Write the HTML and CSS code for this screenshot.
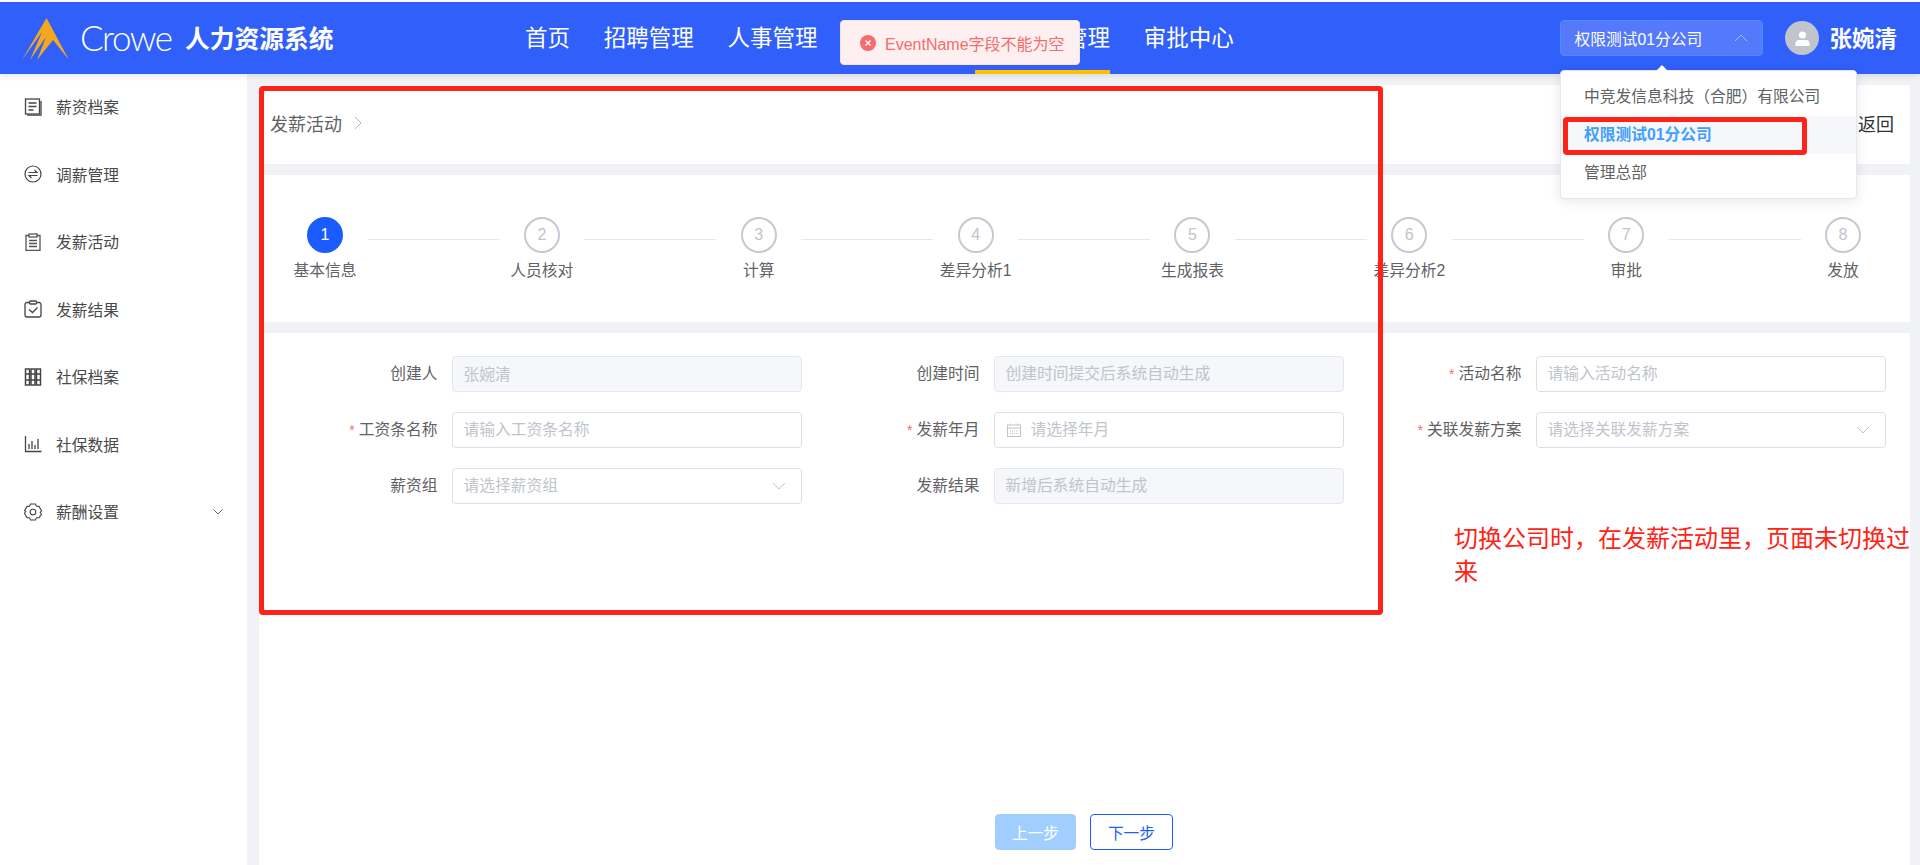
FILE: index.html
```html
<!DOCTYPE html>
<html lang="zh-CN">
<head>
<meta charset="utf-8">
<title>人力资源系统</title>
<link rel="stylesheet" href="styles.css">
</head>
<body>
<div class="app">
  <header class="header">
    <div class="brand">
      <svg class="logo" width="47" height="42" viewBox="0 0 47 42"><path fill="#f4a81f" d="M24.500 0 47 42 31 22 15 42 24 19 8 42 20 14 0 42Z"/></svg>
      <span class="crowe">Crowe</span>
      <span class="title">人力资源系统</span>
    </div>
    <nav class="nav">
      <a class="nav-item">首页</a>
      <a class="nav-item">招聘管理</a>
      <a class="nav-item">人事管理</a>
      <a class="nav-item">组织管理</a>
      <a class="nav-item active">薪酬福利管理</a>
      <a class="nav-item">审批中心</a>
    </nav>
    <div class="user-area">
      <div class="company">
        <span>权限测试01分公司</span>
        <svg class="company-chevron" width="14" height="8" viewBox="0 0 14 8"><path d="M1 7 7 1l6 6" fill="none" stroke="#a9bcfb" stroke-width="1"/></svg>
      </div>
      <div class="avatar">
        <svg width="15" height="15" viewBox="0 0 15 15"><circle cx="7.500" cy="4" r="3.600" fill="#fff"/><path d="M.5 15v-2.500C.5 10.500 2 9 4 9h7c2 0 3.500 1.500 3.500 3.500V15Z" fill="#fff"/></svg>
      </div>
      <span class="username">张婉清</span>
    </div>
  </header>

  <div class="body">
    <aside class="sidebar">
      <div class="side-item">
        <svg class="side-icon" viewBox="0 0 18 18" fill="none" stroke="#444" stroke-width="1.300"><rect x="1.500" y="1" width="14" height="15"/><path d="M3 17.200h14V3M4.500 5h8M4.500 8.500h8M4.500 12h5"/></svg>
        <span>薪资档案</span>
      </div>
      <div class="side-item">
        <svg class="side-icon" viewBox="0 0 18 18" fill="none" stroke="#444" stroke-width="1.200"><circle cx="9" cy="9" r="8"/><path d="M4.500 7.500h8.500L10.500 5M13.500 10.500H5l2.500 2.500"/></svg>
        <span>调薪管理</span>
      </div>
      <div class="side-item">
        <svg class="side-icon" viewBox="0 0 18 18" fill="none" stroke="#555" stroke-width="1.300"><path d="M5 2.500H2v15h14v-15h-3"/><rect x="5" y="1" width="8" height="3"/><path d="M5 7.500h8M5 10.500h8M5 13.500h8"/></svg>
        <span>发薪活动</span>
      </div>
      <div class="side-item">
        <svg class="side-icon" viewBox="0 0 18 18" fill="none" stroke="#444" stroke-width="1.300"><path d="M5.500 2.500H3a2 2 0 0 0-2 2V15a2 2 0 0 0 2 2h12a2 2 0 0 0 2-2V4.500a2 2 0 0 0-2-2h-2.500"/><rect x="5.500" y="1" width="7" height="3" rx="1"/><path d="m5 9.500 3.500 3 5-5"/></svg>
        <span>发薪结果</span>
      </div>
      <div class="side-item">
        <svg class="side-icon" viewBox="0 0 18 18" fill="none" stroke="#444" stroke-width="1.500"><rect x="1.500" y="1" width="4" height="16"/><rect x="7" y="1" width="4" height="16"/><rect x="12.500" y="1" width="4" height="16"/><path d="M1.500 6h15M1.500 12h15"/></svg>
        <span>社保档案</span>
      </div>
      <div class="side-item">
        <svg class="side-icon" viewBox="0 0 18 18" fill="none" stroke="#444" stroke-width="1.300"><path d="M1.500 1v15.500h16M5 14V9M8 14V6M11 14v-4M14 14V4"/></svg>
        <span>社保数据</span>
      </div>
      <div class="side-item">
        <svg class="side-icon" viewBox="0 0 18 18" fill="none" stroke="#444" stroke-width="1.100"><path d="M6.500 1h5l1 2.200 2.500.2 2.500 4.300-1.300 1.800 1.300 1.800L15 14.600l-2.500.2-1 2.200h-5l-1-2.200-2.500-.2-2.500-4.300 1.300-1.800L.5 7.700 3 3.400l2.500-.2Z"/><circle cx="9" cy="9" r="2.800"/></svg>
        <span>薪酬设置</span>
        <svg class="side-chevron" width="10" height="6" viewBox="0 0 10 6"><path d="m.5.500 4.500 4.500L9.500.500" fill="none" stroke="#666"/></svg>
      </div>
    </aside>

    <main class="main">
      <section class="card crumb-card">
        <div class="crumb">
          <span>发薪活动</span>
          <svg width="8" height="14" viewBox="0 0 8 14"><path d="m1 1 6 6-6 6" fill="none" stroke="#b4b7bd"/></svg>
        </div>
        <span class="back">返回</span>
      </section>

      <section class="card steps">
        <div class="step active"><div class="step-num">1</div><div class="step-label">基本信息</div></div>
        <div class="step-line"></div>
        <div class="step"><div class="step-num">2</div><div class="step-label">人员核对</div></div>
        <div class="step-line"></div>
        <div class="step"><div class="step-num">3</div><div class="step-label">计算</div></div>
        <div class="step-line"></div>
        <div class="step"><div class="step-num">4</div><div class="step-label">差异分析1</div></div>
        <div class="step-line"></div>
        <div class="step"><div class="step-num">5</div><div class="step-label">生成报表</div></div>
        <div class="step-line"></div>
        <div class="step"><div class="step-num">6</div><div class="step-label">差异分析2</div></div>
        <div class="step-line"></div>
        <div class="step"><div class="step-num">7</div><div class="step-label">审批</div></div>
        <div class="step-line"></div>
        <div class="step"><div class="step-num">8</div><div class="step-label">发放</div></div>
      </section>

      <section class="card form-card">
        <div class="form-grid">
          <div class="field"><label class="field-label">创建人</label><div class="control disabled"><input value="张婉清" disabled></div></div>
          <div class="field"><label class="field-label">创建时间</label><div class="control disabled"><input placeholder="创建时间提交后系统自动生成" disabled></div></div>
          <div class="field"><label class="field-label req">活动名称</label><div class="control"><input placeholder="请输入活动名称"></div></div>

          <div class="field"><label class="field-label req">工资条名称</label><div class="control"><input placeholder="请输入工资条名称"></div></div>
          <div class="field"><label class="field-label req">发薪年月</label><div class="control">
            <svg class="cal" width="14" height="14" viewBox="0 0 14 14" fill="none" stroke="#c0c4cc"><rect x=".5" y="2" width="13" height="11.500"/><path d="M.5 5h13M3.500 .5V2M10.500 .5V2"/><path d="M3 8h8M3 10.500h8" stroke-dasharray="1 1"/></svg>
            <input placeholder="请选择年月"></div></div>
          <div class="field"><label class="field-label req">关联发薪方案</label><div class="control"><input placeholder="请选择关联发薪方案">
            <svg class="chev" width="14" height="8" viewBox="0 0 14 8"><path d="m1 1 6 6 6-6" fill="none" stroke="#c0c4cc"/></svg></div></div>

          <div class="field"><label class="field-label">薪资组</label><div class="control"><input placeholder="请选择薪资组">
            <svg class="chev" width="14" height="8" viewBox="0 0 14 8"><path d="m1 1 6 6 6-6" fill="none" stroke="#c0c4cc"/></svg></div></div>
          <div class="field"><label class="field-label">发薪结果</label><div class="control disabled"><input placeholder="新增后系统自动生成" disabled></div></div>
        </div>
        <div class="form-actions">
          <button class="btn btn-prev" type="button">上一步</button>
          <button class="btn btn-next" type="button">下一步</button>
        </div>
      </section>
    </main>
  </div>

  <div class="toast">
    <svg width="16" height="16" viewBox="0 0 16 16"><circle cx="8" cy="8" r="8" fill="#f56c6c"/><path d="m5.500 5.500 5 5m0-5-5 5" stroke="#fff" stroke-width="1.400"/></svg>
    <span>EventName字段不能为空</span>
  </div>

  <div class="dropdown">
    <div class="dropdown-arrow"></div>
    <div class="option">中竞发信息科技（合肥）有限公司</div>
    <div class="option selected">权限测试01分公司</div>
    <div class="option">管理总部</div>
  </div>

  <div class="mark mark-main"></div>
  <div class="mark mark-option"></div>
  <div class="note">切换公司时，在发薪活动里，页面未切换过来</div>
</div>
</body>
</html>
```
FILE: styles.css
```css
* { box-sizing: border-box; }
html, body { margin: 0; height: 100%; }
body {
  background: #fff;
  font-family: "Liberation Sans", "Noto Sans CJK SC", sans-serif;
  font-size: 15.75px;
  color: #606266;
  overflow: hidden;
}
.app {
  position: relative;
  width: 1920px;
  height: 865px;
  padding-top: 2px;
  display: flex;
  flex-direction: column;
  overflow: hidden;
}

/* header */
.header {
  position: relative;
  z-index: 2;
  flex: none;
  height: 72px;
  background: #305ffa;
  color: #fff;
  display: flex;
  align-items: center;
  box-shadow: 0 2px 6px rgba(0, 0, 0, .1);
}
.brand {
  width: 525px;
  flex: none;
  padding-left: 22px;
  display: flex;
  align-items: center;
}
.logo { flex: none; margin-top: 2px; }
.crowe {
  margin-left: 11px;
  margin-bottom: 2px;
  width: 91px;
  flex: none;
  font-family: Lato, sans-serif;
  font-weight: 300;
  font-size: 35px;
  letter-spacing: -1.500px;
  line-height: 1;
  white-space: nowrap;
}
.title {
  margin-left: 14px;
  margin-bottom: 2px;
  font-size: 24.750px;
  font-weight: 700;
  white-space: nowrap;
}
.nav {
  display: flex;
  align-items: stretch;
  gap: 33.750px;
  height: 100%;
}
.nav-item {
  display: flex;
  align-items: center;
  padding-bottom: 4px;
  font-size: 22.500px;
  color: #fff;
  border-bottom: 4px solid transparent;
  border-top: 4px solid transparent;
  white-space: nowrap;
}
.nav-item.active { border-bottom-color: #ffc000; }
.user-area {
  margin-left: auto;
  padding-right: 23px;
  display: flex;
  align-items: center;
}
.company {
  width: 203px;
  height: 36px;
  padding: 0 13px;
  border: 1px solid #4a8dfb;
  border-radius: 4px;
  background: #5479fb;
  font-size: 15.750px;
  display: flex;
  align-items: center;
  justify-content: space-between;
}
.company-chevron { margin-right: 1px; }
.avatar {
  width: 34px;
  height: 34px;
  margin-left: 22px;
  border-radius: 50%;
  background: #c0c4cc;
  display: flex;
  align-items: center;
  justify-content: center;
}
.username {
  margin-left: 10px;
  margin-bottom: 2px;
  font-size: 22.500px;
  font-weight: 700;
}

/* frame */
.body {
  flex: 1;
  min-height: 0;
  display: flex;
  background: #f0f2f5;
}
.sidebar {
  width: 247px;
  flex: none;
  background: #fff;
  color: #4a4a4a;
}
.side-item {
  height: 67.500px;
  padding: 0 24px 2px;
  display: flex;
  align-items: center;
}
.side-icon { width: 18px; height: 18px; margin-right: 14px; flex: none; }
.side-chevron { margin-left: auto; }
.main {
  flex: 1;
  min-width: 0;
  margin: 0 10px 0 12px;
  padding-top: 11px;
  display: flex;
  flex-direction: column;
  gap: 11px;
}
.card { background: #fff; }

/* breadcrumb */
.crumb-card {
  flex: none;
  height: 79px;
  padding: 0 16px 3px 11px;
  display: flex;
  align-items: center;
  justify-content: space-between;
}
.crumb {
  display: flex;
  align-items: center;
  gap: 12px;
  font-size: 18px;
  color: #606266;
}
.back { font-size: 18px; color: #303133; }

/* steps */
.steps {
  flex: none;
  height: 147px;
  padding: 42px 31px 0 30px;
  display: flex;
  align-items: flex-start;
}
.step {
  width: 72px;
  flex: none;
  display: flex;
  flex-direction: column;
  align-items: center;
}
.step-num {
  width: 36px;
  height: 36px;
  border: 2px solid #c6c9d1;
  border-radius: 50%;
  color: #c0c4cc;
  font-size: 16px;
  display: flex;
  align-items: center;
  justify-content: center;
}
.step.active .step-num {
  background: #1a5cff;
  border-color: #1a5cff;
  color: #fff;
}
.step-label {
  margin-top: 6px;
  line-height: 24px;
  white-space: nowrap;
  color: #606266;
}
.step-line {
  flex: 1;
  height: 1px;
  margin: 22px 6.500px 0;
  background: #e4e7ed;
}

/* form */
.form-card {
  flex: 1;
  min-height: 0;
  padding: 23px 24.500px 15px 48.500px;
  display: flex;
  flex-direction: column;
}
.form-grid {
  display: grid;
  grid-template-columns: repeat(3, 1fr);
  column-gap: 48px;
  row-gap: 20px;
}
.field {
  display: flex;
  align-items: center;
  gap: 14px;
}
.field-label {
  width: 130px;
  flex: none;
  padding-bottom: 3px;
  text-align: right;
  color: #606266;
}
.field-label.req::before {
  content: "*";
  color: #f56c6c;
  margin-right: 4px;
  font-size: 14px;
}
.control {
  flex: 1;
  min-width: 0;
  height: 36px;
  padding: 0 15px 0 11px;
  border: 1px solid #dcdfe6;
  border-radius: 4px;
  background: #fff;
  display: flex;
  align-items: center;
}
.control.disabled { background: #f5f7fa; border-color: #e4e7ed; }
.control input {
  flex: 1;
  min-width: 0;
  height: 100%;
  padding: 0 0 1px;
  border: 0;
  outline: 0;
  background: transparent;
  font: inherit;
  color: #606266;
}
.control input::placeholder { color: #c0c4cc; opacity: 1; }
.control input:disabled { color: #c0c4cc; }
.cal { flex: none; margin-right: 10px; margin-left: 1px; }
.chev { flex: none; }
.form-actions {
  margin-top: auto;
  margin-left: -48.500px;
  margin-right: -23.500px;
  display: flex;
  justify-content: center;
  gap: 14px;
}
.btn {
  height: 36px;
  border-radius: 4px;
  font: inherit;
  padding: 0;
}
.btn-prev {
  width: 81px;
  border: 1px solid #a0cfff;
  background: #a0cfff;
  color: #fff;
}
.btn-next {
  width: 83px;
  border: 1px solid #1a5cff;
  background: #fff;
  color: #1a5cff;
}

/* overlays */
.toast {
  position: absolute;
  z-index: 5;
  left: 840px;
  top: 20px;
  width: 240px;
  height: 45px;
  padding-left: 19px;
  border: 1px solid #fde2e2;
  border-radius: 4px;
  background: #fef0f0;
  color: #f56c6c;
  font-size: 16px;
  display: flex;
  align-items: center;
  gap: 9px;
  white-space: nowrap;
}
.dropdown {
  position: absolute;
  z-index: 4;
  left: 1560px;
  top: 70px;
  width: 297px;
  padding: 7px 0 6px;
  border: 1px solid #e4e7ed;
  border-radius: 4px;
  background: #fff;
  box-shadow: 0 2px 12px rgba(0, 0, 0, .1);
}
.dropdown-arrow {
  position: absolute;
  left: 95px;
  top: -6px;
  width: 0;
  height: 0;
  border-left: 6px solid transparent;
  border-right: 6px solid transparent;
  border-bottom: 6px solid #fff;
}
.option {
  height: 38px;
  padding-left: 23px;
  line-height: 38px;
  color: #606266;
}
.option.selected {
  background: #f5f7fa;
  color: #409eff;
  font-weight: 700;
}
.mark {
  position: absolute;
  z-index: 6;
  border: 5px solid #ff2317;
  border-radius: 4px;
  pointer-events: none;
}
.mark-main { left: 259px; top: 86px; width: 1124px; height: 529px; }
.mark-option { left: 1563px; top: 117px; width: 244px; height: 38px; }
.note {
  position: absolute;
  z-index: 6;
  left: 1454px;
  top: 522px;
  width: 460px;
  font-size: 24px;
  line-height: 33px;
  color: #ff2317;
}
```
